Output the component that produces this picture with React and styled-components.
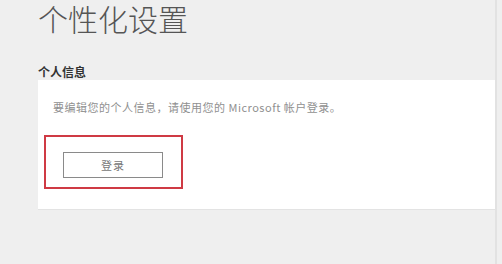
import styled, { createGlobalStyle } from "styled-components";

const GlobalStyle = createGlobalStyle`
  html, body {
    margin: 0;
    padding: 0;
    background: #efefef;
  }
  body {
    font-family: "Noto Sans CJK SC", "Liberation Sans", sans-serif;
  }
`;

const Page = styled.div`
  width: 497px;
  height: 264px;
  box-sizing: border-box;
  padding-left: 38px;
  border-right: 2px solid #e2e2e2;
  overflow: hidden;
`;

const Title = styled.h1`
  margin: 0;
  font-size: 30px;
  line-height: 36px;
  font-weight: 300;
  color: #555;
`;

const SectionLabel = styled.h2`
  margin: 28px 0 0;
  font-size: 12px;
  line-height: 16px;
  font-weight: 700;
  color: #333;
`;

const Panel = styled.div`
  height: 130px;
  box-sizing: border-box;
  background: #fff;
  padding: 20px 0 0 15px;
  border-bottom: 1px solid #e3e3e3;
`;

const Hint = styled.p`
  margin: 0;
  font-size: 11px;
  line-height: 14px;
  letter-spacing: 0.5px;
  color: #909090;
`;

const Highlight = styled.div`
  display: inline-flex;
  margin: 21px 0 0 -9px;
  padding: 15px 18px 9px 17px;
  border: 2px solid #cf3a44;
`;

const Button = styled.button`
  width: 100px;
  height: 26px;
  box-sizing: border-box;
  border: 1px solid #8a8a8a;
  background: #fff;
  color: #777;
  font-family: inherit;
  font-size: 11px;
  letter-spacing: 1px;
  padding: 0;
`;

export default function App() {
  return (
    <>
      <GlobalStyle />
      <Page>
        <Title>个性化设置</Title>
        <SectionLabel>个人信息</SectionLabel>
        <Panel>
          <Hint>要编辑您的个人信息，请使用您的 Microsoft 帐户登录。</Hint>
          <Highlight>
            <Button>登录</Button>
          </Highlight>
        </Panel>
      </Page>
    </>
  );
}
